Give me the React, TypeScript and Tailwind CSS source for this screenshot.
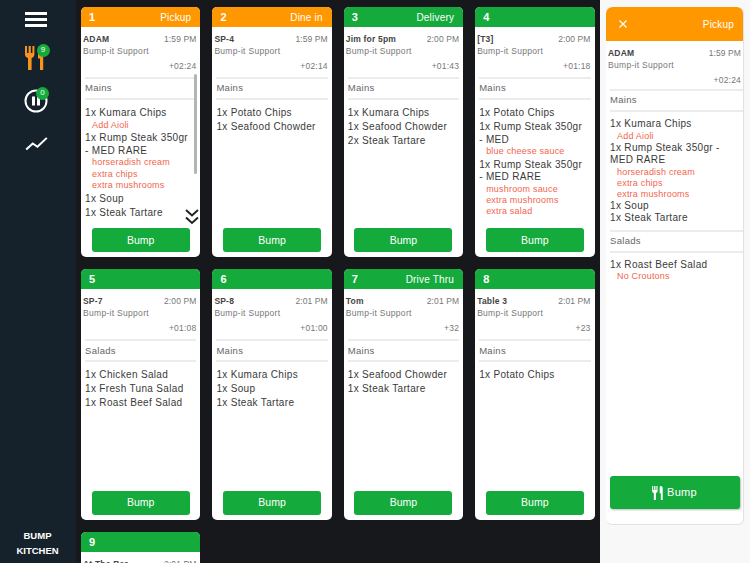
const ORANGE = "bg-[#ff9800]";
const GREEN = "bg-[#14ab3c]";

type Item = { name: string; mods?: string[] };
type Group = { title: string; items: Item[] };
type Order = {
  num: number;
  kind?: string;
  color: string;
  who: string;
  time: string;
  wait: string;
  groups: Group[];
  scroll?: boolean;
};

const kumara: Item = { name: "1x Kumara Chips", mods: ["Add Aioli"] };
const rumpAdam: Item = {
  name: "1x Rump Steak 350gr - MED RARE",
  mods: ["horseradish cream", "extra chips", "extra mushrooms"],
};

const orders: Order[] = [
  {
    num: 1,
    kind: "Pickup",
    color: ORANGE,
    who: "ADAM",
    time: "1:59 PM",
    wait: "+02:24",
    scroll: true,
    groups: [
      {
        title: "Mains",
        items: [kumara, rumpAdam, { name: "1x Soup" }, { name: "1x Steak Tartare" }],
      },
    ],
  },
  {
    num: 2,
    kind: "Dine in",
    color: ORANGE,
    who: "SP-4",
    time: "1:59 PM",
    wait: "+02:14",
    groups: [{ title: "Mains", items: [{ name: "1x Potato Chips" }, { name: "1x Seafood Chowder" }] }],
  },
  {
    num: 3,
    kind: "Delivery",
    color: GREEN,
    who: "Jim for 5pm",
    time: "2:00 PM",
    wait: "+01:43",
    groups: [
      {
        title: "Mains",
        items: [{ name: "1x Kumara Chips" }, { name: "1x Seafood Chowder" }, { name: "2x Steak Tartare" }],
      },
    ],
  },
  {
    num: 4,
    color: GREEN,
    who: "[T3]",
    time: "2:00 PM",
    wait: "+01:18",
    groups: [
      {
        title: "Mains",
        items: [
          { name: "1x Potato Chips" },
          { name: "1x Rump Steak 350gr - MED", mods: ["blue cheese sauce"] },
          {
            name: "1x Rump Steak 350gr - MED RARE",
            mods: ["mushroom sauce", "extra mushrooms", "extra salad"],
          },
        ],
      },
    ],
  },
  {
    num: 5,
    color: GREEN,
    who: "SP-7",
    time: "2:00 PM",
    wait: "+01:08",
    groups: [
      {
        title: "Salads",
        items: [{ name: "1x Chicken Salad" }, { name: "1x Fresh Tuna Salad" }, { name: "1x Roast Beef Salad" }],
      },
    ],
  },
  {
    num: 6,
    color: GREEN,
    who: "SP-8",
    time: "2:01 PM",
    wait: "+01:00",
    groups: [
      {
        title: "Mains",
        items: [{ name: "1x Kumara Chips" }, { name: "1x Soup" }, { name: "1x Steak Tartare" }],
      },
    ],
  },
  {
    num: 7,
    kind: "Drive Thru",
    color: GREEN,
    who: "Tom",
    time: "2:01 PM",
    wait: "+32",
    groups: [{ title: "Mains", items: [{ name: "1x Seafood Chowder" }, { name: "1x Steak Tartare" }] }],
  },
  {
    num: 8,
    color: GREEN,
    who: "Table 3",
    time: "2:01 PM",
    wait: "+23",
    groups: [{ title: "Mains", items: [{ name: "1x Potato Chips" }] }],
  },
  {
    num: 9,
    color: GREEN,
    who: "At The Bar",
    time: "2:01 PM",
    wait: "+20",
    groups: [{ title: "Mains", items: [{ name: "1x Soup" }] }],
  },
];

function ForkKnife({ className }: { className: string }) {
  return (
    <svg viewBox="0 0 22 24" className={className} fill="currentColor">
      <path d="M0 0h2v7h1.600V0h2.200v7h1.600V0h2v8.500c0 2-1.200 3-2.800 3.400V24H3V11.900C1.200 11.500 0 10.500 0 8.500z" />
      <path d="M14.500 0c2.300 0 3.700 1.500 3.700 4v20h-3.200V12.500h-2V4c0-2 .5-4 1.500-4z" />
    </svg>
  );
}

function Badge({ n, className }: { n: number; className: string }) {
  return (
    <span className={`${className} absolute flex h-[13px] w-[13px] items-center justify-center rounded-full bg-[#14ab3c] text-[8px] leading-none font-medium text-white`}>
      {n}
    </span>
  );
}

function Sidebar() {
  return (
    <aside className="flex w-[76px] shrink-0 flex-col items-center bg-[#15222b] text-white">
      <div className="mt-[12px] mr-[4px] flex w-[22px] flex-col gap-[3px]">
        <span className="h-[3px] bg-white" />
        <span className="h-[3px] bg-white" />
        <span className="h-[3px] bg-white" />
      </div>
      <div className="relative mt-[19px] mr-[4px] h-[25px] w-[22px] text-[#f7931e]">
        <ForkKnife className="h-[24px] w-[22px]" />
        <Badge n={9} className="-top-[2.500px] left-[11.500px]" />
      </div>
      <div className="relative mt-[18px] mr-[4px] h-[24px] w-[24px]">
        <svg viewBox="0 0 24 24" className="h-[24px] w-[24px]" fill="none" stroke="currentColor">
          <circle cx="12" cy="12" r="10.500" strokeWidth="2" />
          <path d="M9.500 7.500v9M14.500 7.500v9" strokeWidth="3" />
        </svg>
        <Badge n={0} className="-top-[2.500px] left-[12px]" />
      </div>
      <svg viewBox="0 0 24 16" className="mt-[23px] mr-[4px] h-[15px] w-[23px]" fill="none" stroke="currentColor" strokeWidth="2.200">
        <path d="M1 14.500l7-6.500 5 3.500L23 2" />
      </svg>
      <div className="mt-auto mr-[1px] mb-[7px] flex flex-col items-center gap-[4px] text-[9.500px] leading-[11px] font-bold">
        <span>BUMP</span>
        <span>KITCHEN</span>
      </div>
    </aside>
  );
}

function Lines({ groups, big }: { groups: Group[]; big?: boolean }) {
  return (
    <>
      {groups.map((g) => (
        <div key={g.title} className={big ? "mb-[5px]" : ""}>
          <div className={`${big ? "ml-[4px]" : "mx-[4px]"} flex h-[23px] items-center border-y-2 border-[#ececec] text-[9.500px] tracking-[0.3px] text-[#666]`}>
            {g.title}
          </div>
          <div className={`${big ? "pt-[6px]" : "pt-[7px] pr-[8px]"} pl-[4px] text-[#3a3a3a]`}>
            {g.items.map((item) => (
              <div key={item.name} className={big ? "" : "mb-[1.500px]"}>
                <div className="text-[10px] leading-[12.500px] tracking-[0.33px]">{item.name}</div>
                {item.mods?.map((m) => (
                  <div key={m} className={`${big ? "leading-[11px]" : "leading-[11.250px]"} pl-[7px] text-[9px] tracking-[0.2px] text-[#f2654e]`}>
                    {m}
                  </div>
                ))}
              </div>
            ))}
          </div>
        </div>
      ))}
    </>
  );
}

function Meta({ o, big }: { o: Order; big?: boolean }) {
  return (
    <div className={`${big ? "pb-[3px]" : "pb-[5px]"} pt-[6px] pl-[2px] text-[8.500px] leading-[12px] tracking-[0.3px] text-[#777]`}>
      <div className="flex justify-between">
        <span className="font-bold tracking-[0.2px] text-[#444]">{o.who}</span>
        <span className={`${big ? "pr-[2px]" : "pr-[4px]"} tracking-[0.1px]`}>{o.time}</span>
      </div>
      <div>Bump-it Support</div>
      <div className={`${big ? "pr-[2px]" : "pr-[4px]"} mt-[3px] text-right tracking-[0.2px]`}>{o.wait}</div>
    </div>
  );
}

function Card({ o }: { o: Order }) {
  return (
    <article className="relative flex h-[250.400px] flex-col overflow-hidden rounded-[5px] bg-white">
      <header className={`${o.color} flex h-[20px] shrink-0 items-center justify-between pr-[9px] pl-[8px] text-white`}>
        <span className="text-[11px] font-bold">{o.num}</span>
        {o.kind && <span className="text-[10px] tracking-[0.2px]">{o.kind}</span>}
      </header>
      <Meta o={o} />
      <div className="min-h-0 flex-1 overflow-hidden">
        <Lines groups={o.groups} />
      </div>
      <div className="flex h-[29px] shrink-0 justify-center pb-[5px]">
        <button className="h-[24px] w-[98px] rounded-[3px] bg-[#14ab3c] text-[10.500px] font-medium text-white">
          Bump
        </button>
      </div>
      {o.scroll && (
        <>
          <span className="absolute top-[67px] right-[3px] h-[100px] w-[3px] rounded-full bg-[#b4b4b4]" />
          <svg viewBox="0 0 14 16" className="absolute top-[202px] right-[1px] h-[16px] w-[14px] text-[#222]" fill="none" stroke="currentColor" strokeWidth="2">
            <path d="M1 1l6 5.500L13 1M1 8.500l6 5.500 6-5.500" />
          </svg>
        </>
      )}
    </article>
  );
}

function Detail({ o }: { o: Order }) {
  return (
    <aside className="flex w-[150px] shrink-0 flex-col bg-[#f8f8f8] pt-[7px] pr-[6px] pb-[38px] pl-[6px]">
      <div className="flex h-[518px] flex-col overflow-hidden rounded-[6px] border-r border-b border-[#e2e2e2] bg-white">
        <header className="flex h-[34px] shrink-0 items-center justify-between rounded-t-[6px] bg-[#ff9800] pr-[9px] pl-[13px] text-white">
          <svg viewBox="0 0 8 8" className="h-[8px] w-[8px]" fill="none" stroke="currentColor" strokeWidth="1.200">
            <path d="M.5.5l7 7M7.500.5l-7 7" />
          </svg>
          <span className="text-[10px] tracking-[0.2px]">{o.kind}</span>
        </header>
        <Meta o={o} big />
        <div className="min-h-0 flex-1">
          <Lines groups={[...o.groups, { title: "Salads", items: [{ name: "1x Roast Beef Salad", mods: ["No Croutons"] }] }]} big />
        </div>
        <div className="flex justify-center pb-[15px]">
          <button className="flex h-[33px] w-[130px] items-center justify-center gap-[2px] rounded-[3px] bg-[#14ab3c] text-[11px] font-medium tracking-[0.3px] text-white shadow-[1px_1px_2px_rgba(0,0,0,0.25)]">
            <ForkKnife className="h-[14px] w-[13px]" />
            Bump
          </button>
        </div>
      </div>
    </aside>
  );
}

export default function App() {
  return (
    <div className="flex h-[563px] w-[750px] overflow-hidden bg-[#16181c] font-['Liberation_Sans',Arial,sans-serif]">
      <Sidebar />
      <main className="min-w-0 flex-1 overflow-hidden pt-[7px] pr-[5.500px] pl-[5px]">
        <div className="grid grid-cols-4 gap-x-[12px] gap-y-[12px]">
          {orders.map((o) => (
            <Card key={o.num} o={o} />
          ))}
        </div>
      </main>
      <Detail o={orders[0]} />
    </div>
  );
}
